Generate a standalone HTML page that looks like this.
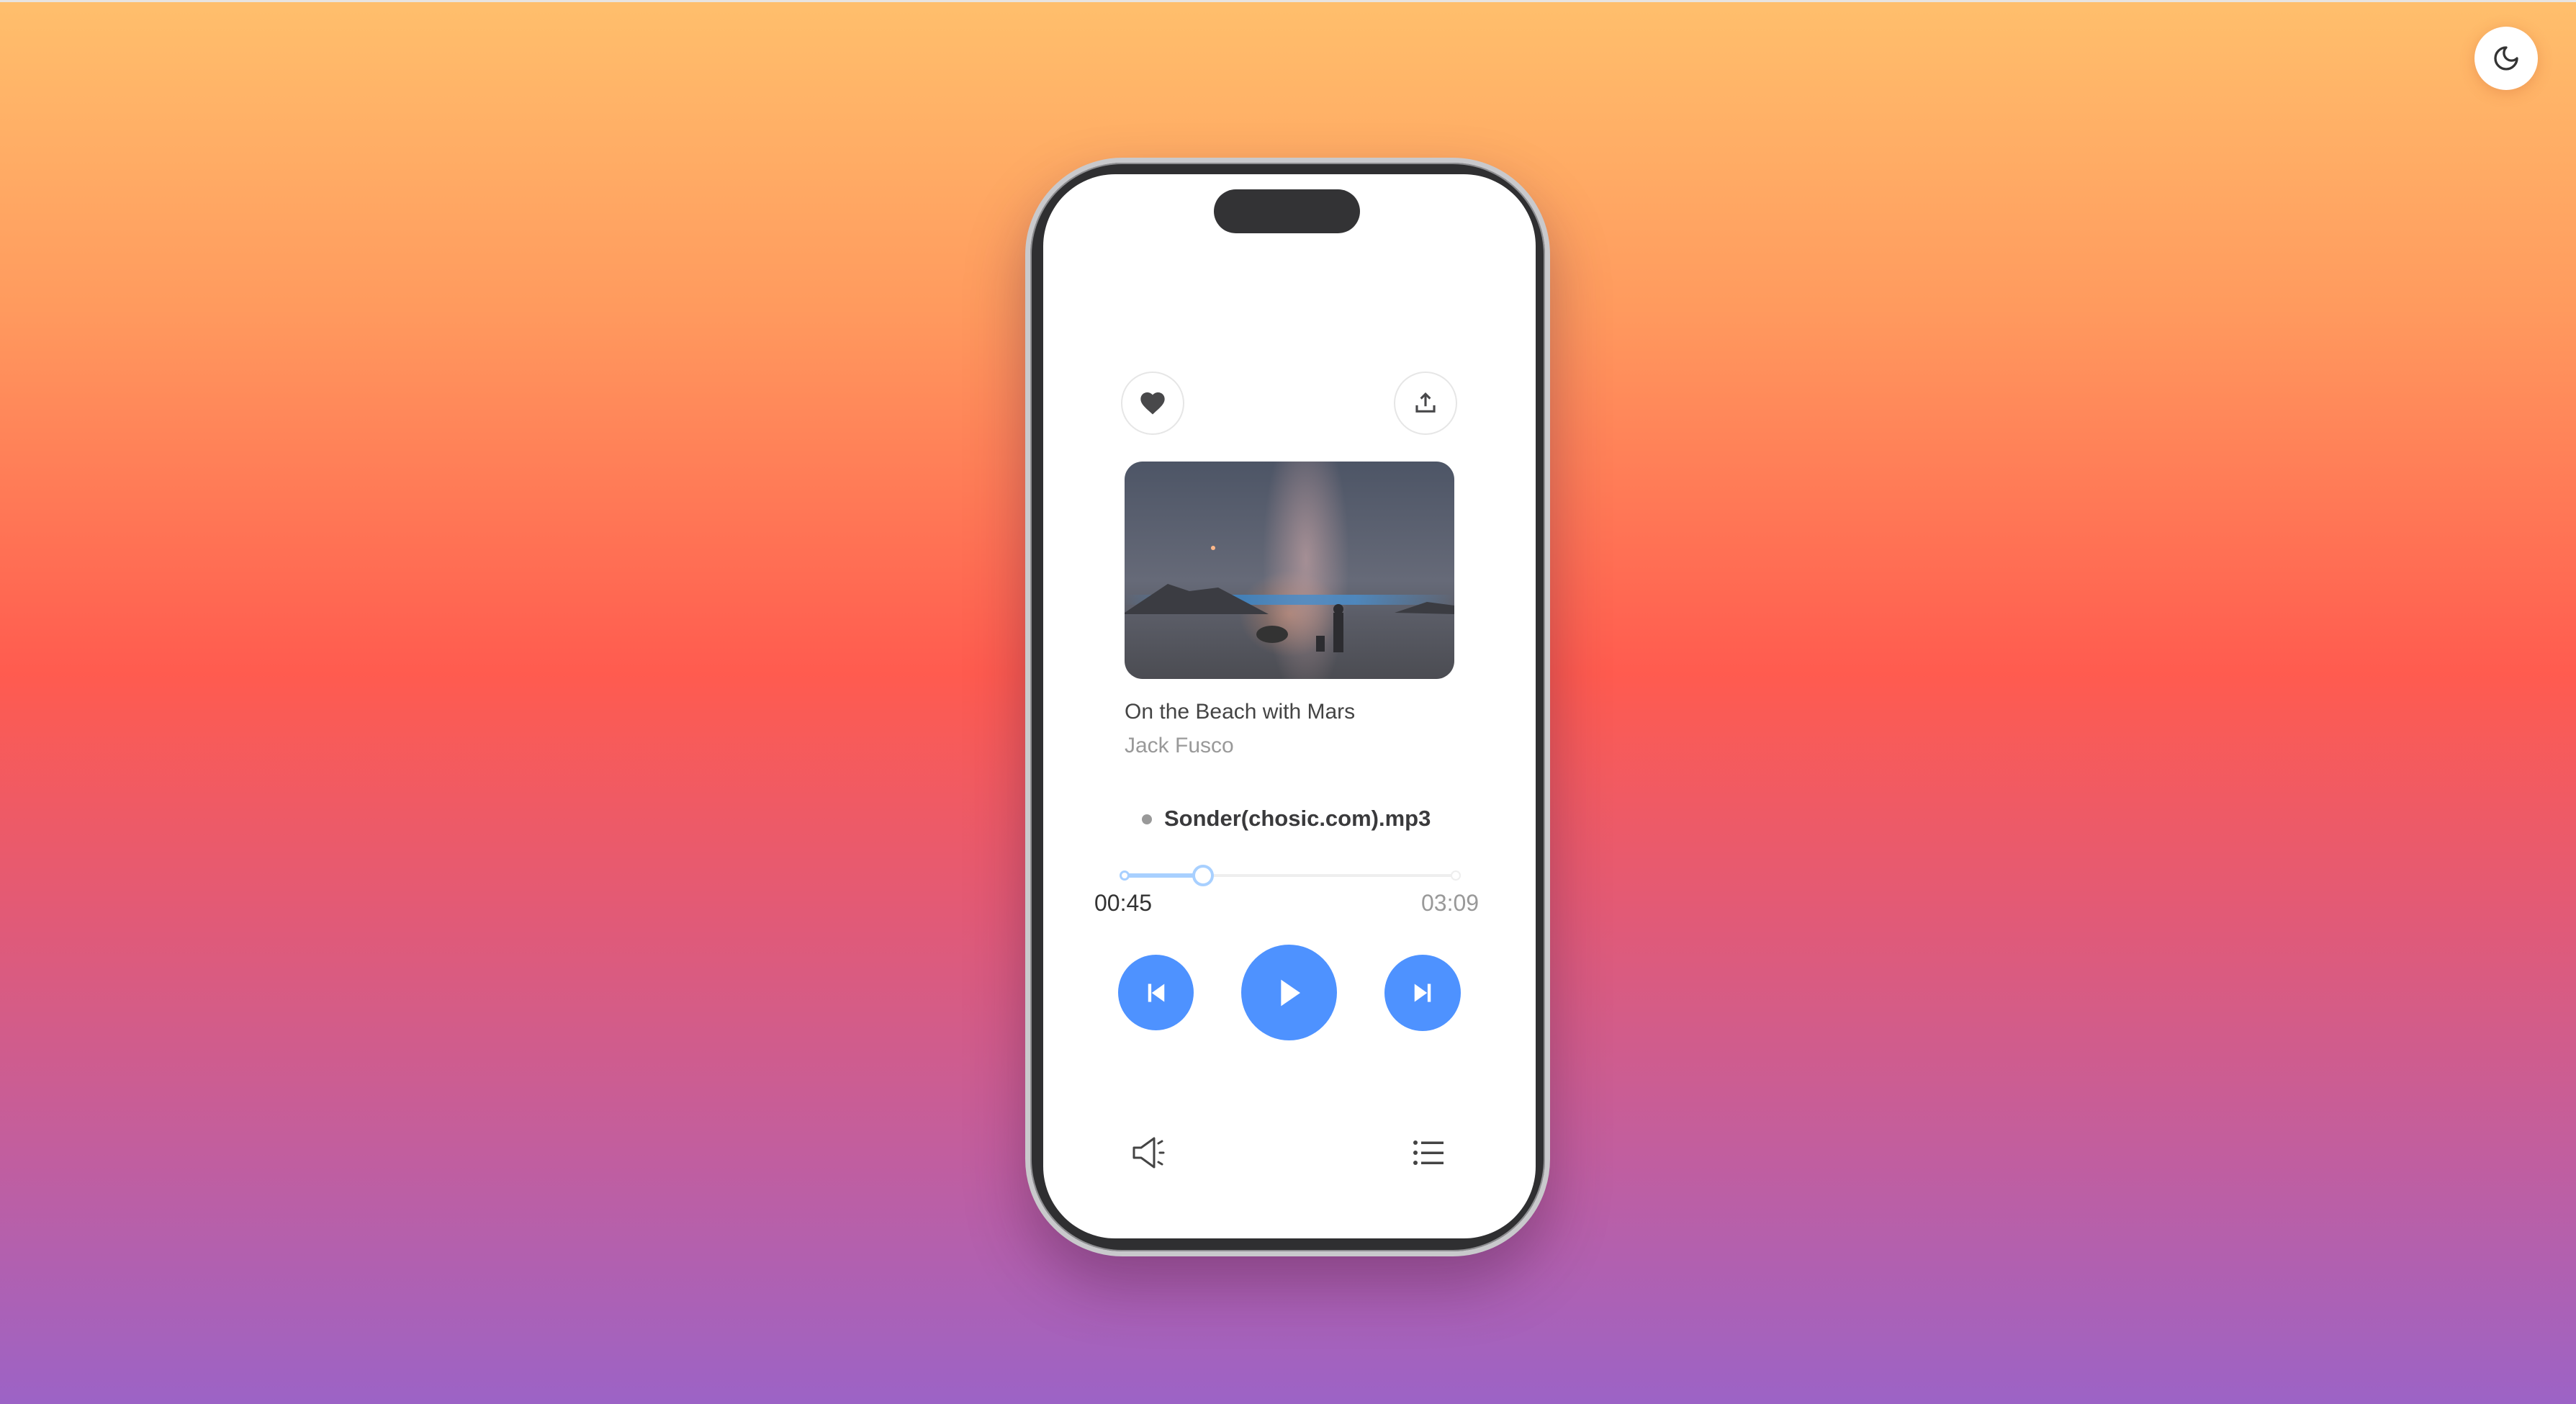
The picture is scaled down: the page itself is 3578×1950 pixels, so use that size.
<!DOCTYPE html>
<html><head><meta charset="utf-8"><style>
*{margin:0;padding:0;box-sizing:border-box}
html,body{width:3578px;height:1950px;overflow:hidden}
body{position:relative;font-family:"Liberation Sans",sans-serif;
background:linear-gradient(180deg,#ffbf6c 0%,#ff9a5e 22%,#ff5b4f 48%,#e25a76 65%,#c25e9e 82%,#9c63c6 100%);}
.topline{position:absolute;left:0;top:0;width:100%;height:3px;background:#e8e4e0}
.abs{position:absolute}
.phone{left:1424px;top:219px;width:729px;height:1526px;border-radius:135px;
background:#2f2f31;border:7px solid #c9c9cc;box-shadow:0 40px 80px rgba(60,20,60,.35),inset 0 0 0 2px #8d8d90}
.screen{left:1449px;top:242px;width:684px;height:1478px;border-radius:100px;background:#fff}
.island{left:1686px;top:263px;width:203px;height:61px;border-radius:31px;background:#333335}
.circ{border-radius:50%;border:2px solid #e6e6e6;background:#fff;display:flex;align-items:center;justify-content:center}
.btn{border-radius:50%;background:#4e92ff;display:flex;align-items:center;justify-content:center}
.t{white-space:nowrap;line-height:1}
</style></head><body>
<div class="topline"></div>
<div class="abs" style="left:3437px;top:37px;width:88px;height:88px;border-radius:50%;background:#fff;box-shadow:0 4px 20px rgba(200,90,40,.3);display:flex;align-items:center;justify-content:center">
<svg width="40" height="40" viewBox="0 0 24 24" fill="none" stroke="#333" stroke-width="2" stroke-linecap="round" stroke-linejoin="round"><path d="M12 3a6 6 0 0 0 9 9 9 9 0 1 1-9-9z"/></svg></div>

<div class="abs phone"></div>
<div class="abs screen"></div>
<div class="abs island"></div>

<div class="abs circ" style="left:1557px;top:516px;width:88px;height:88px">
<svg width="40" height="40" viewBox="0 0 24 24"><path fill="#48484a" d="M12 21.3l-1.4-1.3C5.4 15.4 2 12.3 2 8.5 2 5.4 4.4 3 7.5 3c1.7 0 3.4.8 4.5 2.1C13.1 3.8 14.8 3 16.5 3 19.6 3 22 5.4 22 8.5c0 3.8-3.4 6.9-8.6 11.5z"/></svg></div>
<div class="abs circ" style="left:1936px;top:516px;width:88px;height:88px">
<svg width="34" height="34" viewBox="0 0 24 24" fill="none" stroke="#48484a" stroke-width="2.2"><path d="M12 15V3M7.5 7.5L12 3l4.5 4.5M3.5 14v6h17v-6"/></svg></div>

<div class="abs" style="left:1562px;top:641px;width:458px;height:302px;border-radius:25px;overflow:hidden;
background:radial-gradient(ellipse 60px 200px at 55% 45%,rgba(210,170,170,.6),transparent),radial-gradient(ellipse 70px 60px at 50% 70%,rgba(230,150,110,.5),transparent),linear-gradient(180deg,#4d5566 0%,#666a78 55%,#5a5c66 72%,#4b4c52 100%)">
<div class="abs" style="left:0;top:185px;width:100%;height:14px;background:linear-gradient(90deg,transparent,#3a86c9 30%,#4a90cf 70%,transparent);opacity:.8"></div>
<svg class="abs" style="left:0;top:0" width="458" height="302"><path d="M0 210 L60 170 L90 180 L130 175 L200 212 L0 212Z" fill="#3b3c42"/><path d="M375 210 L420 195 L458 200 L458 212Z" fill="#3b3c42"/><ellipse cx="205" cy="240" rx="22" ry="12" fill="#333"/><rect x="290" y="210" width="14" height="55" fill="#2c2c30"/><circle cx="297" cy="205" r="7" fill="#2c2c30"/><rect x="266" y="242" width="12" height="22" fill="#2c2c30"/><circle cx="123" cy="120" r="3" fill="#ffb88a"/></svg>
</div>

<div class="abs t" style="left:1562px;top:974px;font-size:30px;color:#444">On the Beach with Mars</div>
<div class="abs t" style="left:1562px;top:1021px;font-size:30px;color:#999">Jack Fusco</div>

<div class="abs" style="left:1586px;top:1131px;width:14px;height:14px;border-radius:50%;background:#999"></div>
<div class="abs t" style="left:1617px;top:1121px;font-size:31px;font-weight:bold;color:#3a3a3c">Sonder(chosic.com).mp3</div>

<div class="abs" style="left:1562px;top:1214px;width:460px;height:4px;background:#eee"></div>
<div class="abs" style="left:1562px;top:1213px;width:109px;height:6px;background:#a8d0ff"></div>
<div class="abs" style="left:1555px;top:1209px;width:14px;height:14px;border-radius:50%;border:3px solid #a8d0ff;background:#fff"></div>
<div class="abs" style="left:2015px;top:1209px;width:14px;height:14px;border-radius:50%;border:2px solid #eee;background:#fff"></div>
<div class="abs" style="left:1656px;top:1201px;width:30px;height:30px;border-radius:50%;border:4px solid #a8d0ff;background:#fff"></div>

<div class="abs t" style="left:1520px;top:1238px;font-size:32px;color:#333">00:45</div>
<div class="abs t" style="left:1974px;top:1238px;font-size:32px;color:#999">03:09</div>

<div class="abs btn" style="left:1553px;top:1326px;width:105px;height:105px"><svg width="30" height="30" viewBox="0 0 24 24" fill="#fff"><rect x="3" y="2" width="3.5" height="20"/><path d="M21 2v20L7 12z"/></svg></div>
<div class="abs btn" style="left:1724px;top:1312px;width:133px;height:133px"><svg width="40" height="40" viewBox="0 0 24 24" fill="#fff"><path d="M5 1v22l16-11z"/></svg></div>
<div class="abs btn" style="left:1923px;top:1326px;width:106px;height:106px"><svg width="30" height="30" viewBox="0 0 24 24" fill="#fff"><rect x="17.5" y="2" width="3.5" height="20"/><path d="M3 2v20l14-10z"/></svg></div>

<svg class="abs" style="left:1573px;top:1578px" width="48" height="46" viewBox="0 0 48 46" fill="none" stroke="#444" stroke-width="3" stroke-linejoin="round" stroke-linecap="round"><path d="M2 16h10L30 3v40L12 30H2z"/><path d="M36 10l5-3M38 23h5M36 36l5 3"/></svg>
<svg class="abs" style="left:1962px;top:1583px" width="44" height="36" viewBox="0 0 44 36" fill="#444"><circle cx="4" cy="4" r="3"/><circle cx="4" cy="18" r="3"/><circle cx="4" cy="32" r="3"/><rect x="12" y="2.5" width="31" height="3.5"/><rect x="12" y="16.5" width="31" height="3.5"/><rect x="12" y="30.5" width="31" height="3.5"/></svg>
</body></html>
